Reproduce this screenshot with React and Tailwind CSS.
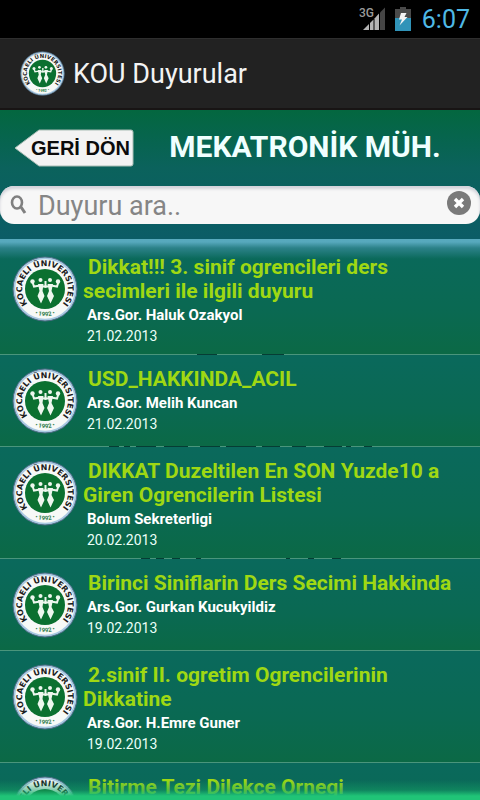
import { useState } from "react";

const announcements = [
  {
    id: 1,
    title: "Dikkat!!! 3. sinif ogrencileri ders secimleri ile ilgili duyuru",
    author: "Ars.Gor. Haluk Ozakyol",
    date: "21.02.2013",
    marks: [[197, 20], [262, 22]],
  },
  {
    id: 2,
    title: "USD_HAKKINDA_ACIL",
    author: "Ars.Gor. Melih Kuncan",
    date: "21.02.2013",
    marks: [[109, 10], [124, 6], [136, 20], [164, 24], [200, 20], [226, 30], [262, 18], [292, 14], [324, 18], [346, 5], [364, 8]],
  },
  {
    id: 3,
    title: "DIKKAT Duzeltilen En SON Yuzde10 a Giren Ogrencilerin Listesi",
    author: "Bolum Sekreterligi",
    date: "20.02.2013",
    marks: [[141, 9], [156, 8], [172, 8], [196, 5], [286, 4], [308, 6], [332, 9]],
  },
  {
    id: 4,
    title: "Birinci Siniflarin Ders Secimi Hakkinda",
    author: "Ars.Gor. Gurkan Kucukyildiz",
    date: "19.02.2013",
    marks: [],
  },
  {
    id: 5,
    title: "2.sinif II. ogretim Ogrencilerinin Dikkatine",
    author: "Ars.Gor. H.Emre Guner",
    date: "19.02.2013",
    marks: [],
  },
  {
    id: 6,
    title: "Bitirme Tezi Dilekce Ornegi",
    marks: [],
  },
];

function App() {
  const [query, setQuery] = useState("");

  const visible = announcements.filter((a) =>
    a.title.toLowerCase().includes(query.toLowerCase())
  );

  return (
    <div className="h-screen flex flex-col overflow-hidden bg-[#0b5c63] font-[Roboto,sans-serif]">
      <StatusBar />

      {/* ACTION BAR */}
      <header className="flex shrink-0 items-center gap-2 h-18 px-5 bg-[#222222] border-t border-[#2e2e2e] border-b-2 border-b-[#181414]">
        <Logo id="app" className="size-[45px]" />
        <h1 className="pt-0.5 text-[27px] text-[#f3f3f3]">KOU Duyurular</h1>
      </header>

      {/* DEPARTMENT + SEARCH */}
      <section className="shrink-0 pb-[15px] bg-linear-to-b from-[#04673f] via-[#0b625c] via-45% to-[#0b5c66]">
        <div className="flex items-center h-[76px] pl-[14px]">
          <BackButton />
          <h2 className="flex-1 pr-1 pb-0.5 text-center text-[30px] leading-9 font-bold text-[#f0ffff]">
            MEKATRONİK MÜH.
          </h2>
        </div>

        <div className="flex items-center h-[38px] pl-2.5 pr-2 rounded-[14px] bg-[#f7f7f7] shadow-[inset_0_3px_3px_#d2d2da]">
          <SearchIcon />
          <input
            type="text"
            aria-label="Duyuru ara"
            placeholder="Duyuru ara.."
            value={query}
            onChange={(e) => setQuery(e.target.value)}
            className="flex-1 min-w-0 ml-2.5 h-full pt-0.5 text-[27px] text-[#333333] placeholder:text-[#858585] outline-none bg-transparent"
          />
          <button type="button" aria-label="Temizle" className="pb-1" onClick={() => setQuery("")}>
            <ClearIcon />
          </button>
        </div>
      </section>

      {/* LIST */}
      <main className="relative flex-1 min-h-0 overflow-hidden bg-[#0a6a55]">
        <ul className="pt-1">
          {visible.map((a) => (
            <AnnouncementRow key={a.id} item={a} />
          ))}
        </ul>
        <div className="absolute inset-x-0 top-0 h-5 pointer-events-none bg-linear-to-b from-[#57a9bd] from-15% via-[#3a8c9c]/70 via-45% to-transparent" />
        <div className="absolute inset-x-0 bottom-0 h-5 pointer-events-none bg-linear-to-t from-[#20c477] from-20% via-[#14a066]/50 via-50% to-transparent" />
      </main>
    </div>
  );
}

/* ---------- Helpers ---------- */

function StatusBar() {
  return (
    <div className="flex shrink-0 items-center justify-end h-[38px] pr-2.5 bg-black">
      <svg viewBox="0 0 28 26" className="w-7 h-[26px]">
        <text x="1" y="11" fontSize="12" fontWeight="500" fill="#9a9a9a">3G</text>
        <path d="M5 24L11 18V24Z" fill="#b4b4b4" />
        <path d="M12 24V17L15.500 13.500V24Z" fill="#b4b4b4" />
        <path d="M16.500 24V12.500L21 7.500V24Z" fill="#b4b4b4" />
        <path d="M22 24V6.500L27 1.500V24Z" fill="#454545" />
      </svg>
      <svg viewBox="0 0 16 24" className="ml-[9px] w-4 h-6">
        <path d="M5 0H11V2H16V12H0V2H5Z" fill="#4a4a4a" />
        <path d="M0 11H16V24H0Z" fill="#3093b8" />
        <path d="M6 6H11.500L9.500 10H12.500L4.500 18.500L7 12.500H4Z" fill="#f4f4f4" />
      </svg>
      <span className="ml-[11px] pt-0.5 text-[25px] text-[#4fb9e6]">6:07</span>
    </div>
  );
}

function BackButton() {
  return (
    <button type="button" className="relative w-[120px] h-[38px] shrink-0">
      <svg viewBox="0 0 120 38" className="absolute inset-0 size-full">
        <path d="M1 19L25 1H117Q119 1 119 3V35Q119 37 117 37H25Z" fill="#f3f3f3" stroke="#a9bdb5" />
      </svg>
      <span className="relative block pl-[17px] text-left text-[20px] font-bold text-[#0b0b0b] font-['Liberation_Sans',sans-serif] whitespace-nowrap">
        GERİ DÖN
      </span>
    </button>
  );
}

function AnnouncementRow({ item }) {
  return (
    <li className="min-h-[92px] flex flex-col bg-linear-to-b from-[#0a695c] via-[#0a6952] via-60% to-[#0b6945]">
      <a href={`#duyuru-${item.id}`} className="flex flex-1 items-start pl-3 pr-4">
        <Logo id={`row-${item.id}`} className="size-[66px] mt-[13px] shrink-0" />
        <div className="flex-1 min-w-0 pt-3 pb-[7px] pl-[5px]">
          <h3 className="mb-0.5 indent-[5px] text-[21px] leading-6 font-bold text-[#9fd813]">{item.title}</h3>
          {item.author && (
            <p className="pl-1 text-[15px] leading-[21px] font-bold text-white">{item.author}</p>
          )}
          {item.date && (
            <p className="pl-1 text-[14px] leading-[21px] text-[#eafff8]">{item.date}</p>
          )}
        </div>
      </a>
      <svg className="block w-full h-px" aria-hidden="true">
        <rect width="100%" height="1" fill="#4a957c" />
        {item.marks.map(([x, w]) => (
          <rect key={x} x={x} width={w} height="1" fill="#063d34" />
        ))}
      </svg>
    </li>
  );
}

function Logo({ id, className }) {
  return (
    <svg viewBox="0 0 66 66" className={className} role="img" aria-label="Kocaeli Üniversitesi">
      <defs>
        <path id={`ring-${id}`} d="M18.300 50.500A22.900 22.900 0 1 1 47.700 50.500" />
        <path id={`year-${id}`} d="M17 55A27.300 27.300 0 0 0 49 55" />
      </defs>
      <circle cx="33" cy="33" r="32" fill="#a9c9e2" stroke="#4d6b84" />
      <circle cx="33" cy="33" r="29.800" fill="#f7f9f7" />
      <circle cx="33" cy="33" r="20" fill="#0b7030" />
      <text fontSize="8" fontWeight="700" fill="#1c1c1c" fontFamily="DejaVu Sans, sans-serif">
        <textPath href={`#ring-${id}`} startOffset="50%" textAnchor="middle">KOCAELI ÜNIVERSITESI</textPath>
      </text>
      <text fontSize="6" fontWeight="700" fill="#2f7d4a" textAnchor="middle">
        <textPath href={`#year-${id}`} startOffset="50%">• 1992 •</textPath>
      </text>
      <g fill="#eef7ee">
        <circle cx="28.500" cy="24" r="2" />
        <circle cx="38" cy="24" r="2" />
        <circle cx="20.500" cy="25.500" r="2.200" />
        <circle cx="46" cy="25.500" r="2.200" />
        <path d="M26 28H31.500L30.500 35L32.500 40L29 47.500L25.500 40L27.500 35Z" />
        <path d="M35.500 28H41L39.500 35L42 40L38.500 47.500L35 40L37 35Z" />
      </g>
      <path d="M20.500 26L22 30.500L28 29.500L33.500 31L39 29.500L45 30.500L46.500 26M33.500 31V25" fill="none" stroke="#eef7ee" strokeWidth="2" />
    </svg>
  );
}

function SearchIcon() {
  return (
    <svg viewBox="0 0 18 20" className="w-[18px] h-5 shrink-0" fill="none" stroke="#808080">
      <ellipse cx="7" cy="7.500" rx="5" ry="6" strokeWidth="2.600" />
      <path d="M11 12L15 18" strokeWidth="3" />
    </svg>
  );
}

function ClearIcon() {
  return (
    <svg viewBox="0 0 26 26" className="block size-[26px]">
      <circle cx="13" cy="13" r="12" fill="#7a7a7a" />
      <path d="M9 9L17 17M17 9L9 17" stroke="#ffffff" strokeWidth="3.400" />
    </svg>
  );
}

export default App;
